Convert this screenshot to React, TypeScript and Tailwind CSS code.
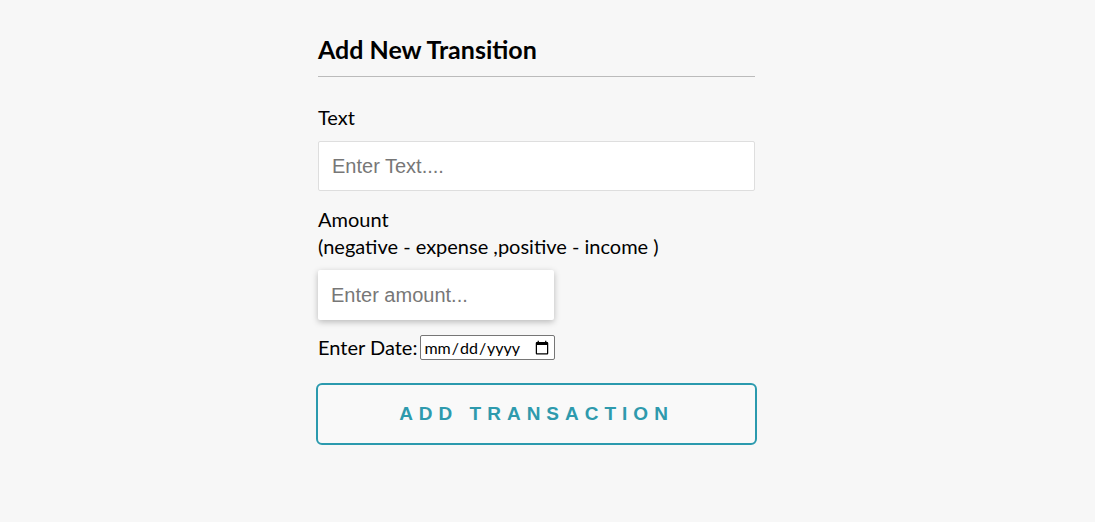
import React from 'react';

const App: React.FC = () => {
  return (
    <div className="min-h-[522px] w-full bg-[#f7f7f7] text-black [font-family:Lato,'Noto_Sans',sans-serif]">
      <div className="ml-[318px] w-[437px] pt-[33px]">
        <h3 className="text-[25px] font-bold leading-[32px]">Add New Transition</h3>
        <hr className="mt-[11px] border-0 border-t border-[#bbbbbb]" />

        <form onSubmit={(e) => e.preventDefault()}>
          <div className="mt-[27px]">
            <label className="block text-[20px] leading-[27px]">Text</label>
            <input
              type="text"
              placeholder="Enter Text...."
              className="mt-[10px] block h-[50px] w-full rounded-[2px] border border-[#dedede] bg-white px-[13px] text-[20px] [font-family:'Liberation_Sans',Arial,sans-serif] placeholder:text-[#777] focus:outline-none"
            />
          </div>

          <div className="mt-[15px]">
            <label className="block text-[20px] leading-[27px]">
              Amount <br />
              (negative - expense ,positive - income )
            </label>
            <input
              type="number"
              placeholder="Enter amount..."
              className="mt-[10px] block h-[50px] w-[236px] rounded-[2px] border-0 bg-white px-[13px] text-[20px] shadow-[0_2px_6px_rgba(0,0,0,0.25)] [font-family:'Liberation_Sans',Arial,sans-serif] placeholder:text-[#777] focus:outline-none"
            />
          </div>

          <div className="mt-[14px] flex items-center gap-[3px] text-[20px] leading-[27px]">
            <label>Enter Date:</label>
            <input
              type="date"
              className="h-[25px] w-[135px] rounded-[2px] border border-[#767676] bg-white px-[2px] text-[16px] leading-none text-black"
            />
          </div>

          <button
            type="submit"
            className="-ml-[2px] mt-[22px] flex h-[62px] w-[441px] items-center justify-center rounded-[6px] border-2 border-[#2b9aae] bg-[#f9f9f9] text-[19px] font-bold tracking-[6px] text-[#2e9aad] [font-family:'Liberation_Sans',Arial,sans-serif]"
          >
            ADD TRANSACTION
          </button>
        </form>
      </div>
    </div>
  );
};

export default App;
